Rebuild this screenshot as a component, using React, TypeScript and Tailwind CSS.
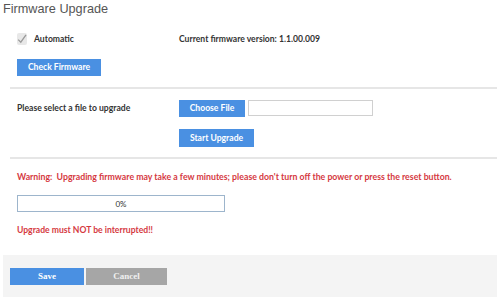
const font = { fontFamily: "Lato, 'Open Sans', 'Liberation Sans', sans-serif" }

const BlueButton = ({ children, className = "" }: { children: React.ReactNode; className?: string }) => (
    <button
        className={`h-[17px] bg-[#4a90e2] text-white text-[8.6px] font-bold leading-none flex items-center justify-center ${className}`}
    >
        {children}
    </button>
)

export default function App() {
    return (
        <div className="w-[500px] h-[299px] bg-white text-[#333] overflow-hidden" style={font}>
            <h1 className="pl-[3px] pt-[1px] h-[18px] text-[12.7px] leading-[16px] text-[#555] font-['Liberation_Sans',sans-serif]">
                Firmware Upgrade
            </h1>

            <div className="pl-[17px] pt-[15px]">
                <div className="grid grid-cols-[162px_1fr] items-center h-[12px]">
                    <label className="flex items-center gap-[7px]">
                        <span className="w-[10px] h-[12px] bg-[#e8e8e8] rounded-[2px] flex items-center justify-center">
                            <svg viewBox="0 0 10 10" className="w-[10px] h-[10px]">
                                <path d="M1.2 5.6 L3.8 8.2 L9 0.8" fill="none" stroke="#9a9a9a" strokeWidth="1.3" />
                            </svg>
                        </span>
                        <span className="text-[8.6px] font-bold">Automatic</span>
                    </label>
                    <span className="text-[8.6px] font-bold">Current firmware version: 1.1.00.009</span>
                </div>
                <BlueButton className="mt-[14px] w-[84px]">Check Firmware</BlueButton>
            </div>

            <div className="ml-[10px] mr-[3px] mt-[11px] h-[2px] bg-[#e6e6e6]" />

            <div className="pl-[17px] pt-[11px]">
                <div className="grid grid-cols-[162px_1fr] items-center">
                    <span className="text-[8.6px] font-bold">Please select a file to upgrade</span>
                    <div className="flex items-start gap-[3px]">
                        <BlueButton className="w-[66px]">Choose File</BlueButton>
                        <div className="w-[125px] h-[16px] border border-[#d0d0d0] bg-white" />
                    </div>
                </div>
                <div className="grid grid-cols-[162px_1fr] mt-[12px]">
                    <span />
                    <BlueButton className="w-[75px] h-[18px]">Start Upgrade</BlueButton>
                </div>
            </div>

            <div className="ml-[10px] mr-[3px] mt-[10px] h-[2px] bg-[#e6e6e6]" />

            <div className="pl-[17px] pt-[12px]">
                <p className="text-[8.75px] font-bold text-[#d5393f] leading-[12px] whitespace-nowrap">
                    Warning:&nbsp; Upgrading firmware may take a few minutes; please don't turn off the power or press the reset button.
                </p>
                <div className="mt-[12px] w-[208px] h-[17px] border border-[#9db5cc] flex items-center justify-center text-[8px] text-[#333]">
                    0%
                </div>
                <p className="mt-[12px] text-[8.6px] font-bold text-[#d5393f] leading-[12px]">
                    Upgrade must NOT be interrupted!!
                </p>
            </div>

            <div className="mx-[3px] mt-[19px] h-[42px] bg-[#f4f4f4] flex items-start pt-[13px] pl-[7px] gap-[2px]">
                <button className="w-[74px] h-[17px] bg-[#4a90e2] text-white text-[9px] font-bold font-['Liberation_Serif',serif]">
                    Save
                </button>
                <button className="w-[81px] h-[17px] bg-[#a6a6a6] text-[#f0f0f0] text-[9px] font-bold font-['Liberation_Serif',serif]">
                    Cancel
                </button>
            </div>
        </div>
    )
}
